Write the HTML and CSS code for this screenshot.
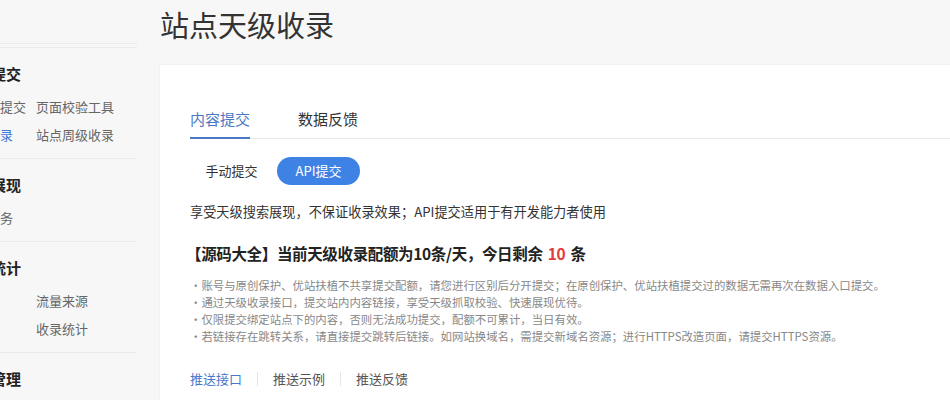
FILE: index.html
```html
<!DOCTYPE html>
<html lang="zh-CN">
<head>
<meta charset="utf-8">
<title>站点天级收录</title>
<link rel="stylesheet" href="styles.css">
</head>
<body>
<div class="page">
  <aside class="sidebar">
    <div class="side-top"></div>
    <div class="side-inner">
      <section class="side-sec first">
        <h3 class="side-head">资源提交</h3>
        <div class="side-row"><span class="side-l">普通链提交</span><span class="side-r">页面校验工具</span></div>
        <div class="side-row"><span class="side-l active">天级收录</span><span class="side-r">站点周级收录</span></div>
      </section>
      <section class="side-sec">
        <h3 class="side-head">搜索展现</h3>
        <div class="side-row"><span class="side-l">移动服务</span><span class="side-r"></span></div>
      </section>
      <section class="side-sec">
        <h3 class="side-head">数据统计</h3>
        <div class="side-row"><span class="side-l"></span><span class="side-r">流量来源</span></div>
        <div class="side-row"><span class="side-l"></span><span class="side-r">收录统计</span></div>
      </section>
      <section class="side-sec">
        <h3 class="side-head">站点管理</h3>
      </section>
    </div>
  </aside>
  <main class="main">
    <h1 class="title">站点天级收录</h1>
    <div class="card">
      <div class="tabs">
        <span class="tab active">内容提交</span>
        <span class="tab">数据反馈</span>
      </div>
      <div class="pills">
        <span class="pill">手动提交</span>
        <span class="pill on">API提交</span>
      </div>
      <p class="desc">享受天级搜索展现，不保证收录效果；API提交适用于有开发能力者使用</p>
      <h2 class="quota">【源码大全】当前天级收录配额为10条/天，今日剩余 <span class="red">10</span> 条</h2>
      <ul class="notes">
        <li>·账号与原创保护、优站扶植不共享提交配额，请您进行区别后分开提交；在原创保护、优站扶植提交过的数据无需再次在数据入口提交。</li>
        <li>·通过天级收录接口，提交站内内容链接，享受天级抓取校验、快速展现优待。</li>
        <li>·仅限提交绑定站点下的内容，否则无法成功提交，配额不可累计，当日有效。</li>
        <li>·若链接存在跳转关系，请直接提交跳转后链接。如网站换域名，需提交新域名资源；进行HTTPS改造页面，请提交HTTPS资源。</li>
      </ul>
      <div class="links">
        <span class="link active">推送接口</span>
        <span class="sep"></span>
        <span class="link">推送示例</span>
        <span class="sep"></span>
        <span class="link">推送反馈</span>
      </div>
    </div>
  </main>
</div>
</body>
</html>
```
FILE: styles.css
```css
* { box-sizing: border-box; }
html, body { margin: 0; padding: 0; }
body {
  background: #f7f7f7;
  font-family: "Noto Sans CJK SC", "Noto Sans", sans-serif;
  color: #333;
  height: 400px;
  overflow: hidden;
}
.page { display: flex; height: 400px; overflow: hidden; }

.sidebar { width: 137px; flex: 0 0 137px; overflow: hidden; }
.side-top { height: 44px; border-bottom: 1px solid #ebebeb; }
.side-inner { margin-top: 3px; }
.side-sec { border-top: 1px solid #ebebeb; padding: 14px 0 9px; }
.side-head {
  margin: 0 0 7px -39px;
  font-size: 15px; line-height: 24px; font-weight: 700; color: #222;
  white-space: nowrap;
}
.side-row { display: flex; margin-left: -39px; height: 28px; line-height: 28px; font-size: 13px; color: #666; white-space: nowrap; }
.side-l { width: 75px; flex: 0 0 75px; }
.side-l.active { color: #3c78d8; }

.main { flex: 1; padding-left: 23px; min-width: 0; }
.title {
  margin: 4px 0 0; font-size: 29px; line-height: 40px; font-weight: 400; color: #333;
  white-space: nowrap;
}
.card {
  margin-top: 21px; background: #fff; height: 335px;
  box-shadow: 0 0 2px rgba(0,0,0,0.07);
  padding: 42px 0 0 30px;
}
.tabs { display: flex; gap: 48px; border-bottom: 1px solid #e9e9e9; }
.tab { font-size: 15px; line-height: 24px; padding-bottom: 6px; border-bottom: 2px solid transparent; margin-bottom: -1px; color: #333; }
.tab.active { color: #4a78c4; border-bottom-color: #4a78c4; }

.pills { display: flex; gap: 4px; margin-top: 18px; }
.pill { min-width: 83px; height: 28px; line-height: 28px; text-align: center; font-size: 13px; border-radius: 14px; color: #333; }
.pill.on { background: #3e82e6; color: #fff; }

.desc { margin: 17px 0 0; font-size: 13.2px; line-height: 20px; color: #333; white-space: nowrap; }
.quota { margin: 19px 0 0 -4px; font-size: 15.5px; letter-spacing: -0.35px; line-height: 24px; font-weight: 700; color: #222; white-space: nowrap; word-spacing: 2px; }
.red { color: #e23b3b; }
.notes { list-style: none; margin: 12px 0 0; padding: 0; font-size: 11.4px; line-height: 17px; color: #888; white-space: nowrap; }

.links { display: flex; align-items: center; margin-top: 24px; font-size: 13px; line-height: 20px; }
.link { color: #555; }
.link.active { color: #4a78c8; }
.sep { width: 1px; height: 14px; background: #e6e6e6; margin: 0 15px; }
```
